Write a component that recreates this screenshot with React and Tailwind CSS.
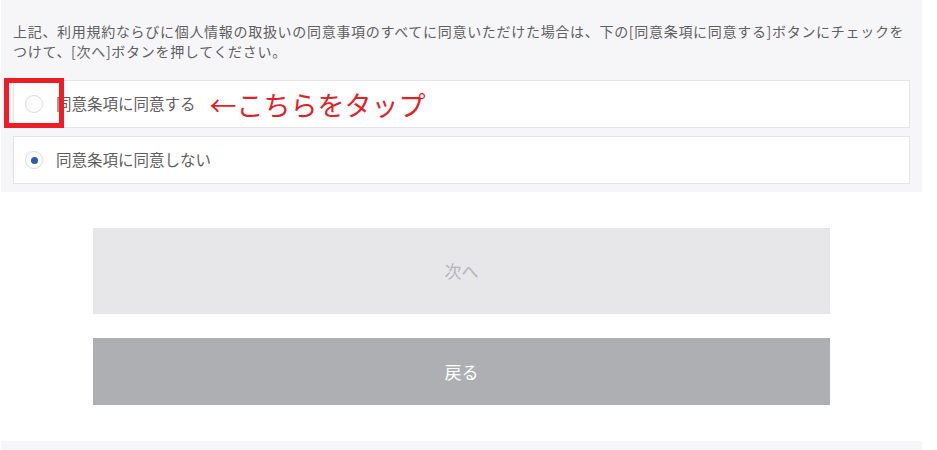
export default function App() {
    return (
        <div className="w-[937px] h-[450px] bg-white font-['Noto_Sans_CJK_JP','Noto_Sans',sans-serif] text-[#606060]">
            <div className="ml-px w-[921px]">
                <section className="bg-[#f6f6f8] px-3 pt-[21px] pb-2">
                    <p className="text-[14px] leading-5 tracking-[0.7px]">
                        上記、利用規約ならびに個人情報の取扱いの同意事項のすべてに同意いただけた場合は、下の[同意条項に同意する]ボタンにチェックを
                        <br />
                        つけて、[次へ]ボタンを押してください。
                    </p>

                    <div className="mt-[19px] flex flex-col gap-2">
                        <label className="relative flex items-center h-12 bg-white border border-[#e4e4e6]">
                            <span className="ml-[11px] w-[18px] h-[18px] rounded-full border border-[#dcdcdc] bg-white" />
                            <span className="ml-[13px] text-[15.5px]">同意条項に同意する</span>
                            <span className="ml-[14px] text-[27px] leading-none text-[#e61e25]">←こちらをタップ</span>
                            <span className="absolute -left-[10px] -top-[3px] w-[60px] h-[50px] border-[5px] border-[#ee1c25]" />
                        </label>

                        <label className="flex items-center h-12 bg-white border border-[#e4e4e6]">
                            <span className="ml-[11px] w-[18px] h-[18px] rounded-full border border-[#dcdcdc] bg-white flex items-center justify-center">
                                <span className="w-[7px] h-[7px] rounded-full bg-[#2a5fb0]" />
                            </span>
                            <span className="ml-[13px] text-[15.5px]">同意条項に同意しない</span>
                        </label>
                    </div>
                </section>

                <div className="pt-9 pb-9 flex flex-col items-center gap-6">
                    <button className="w-[737px] h-[86px] bg-[#e7e7e9] text-[#b5b5ba] text-[17px]">
                        次へ
                    </button>
                    <button className="w-[737px] h-[67px] bg-[#aeafb3] text-white text-[17px]">
                        戻る
                    </button>
                </div>

                <div className="h-[9px] bg-[#f6f6f8]" />
            </div>
        </div>
    );
}
